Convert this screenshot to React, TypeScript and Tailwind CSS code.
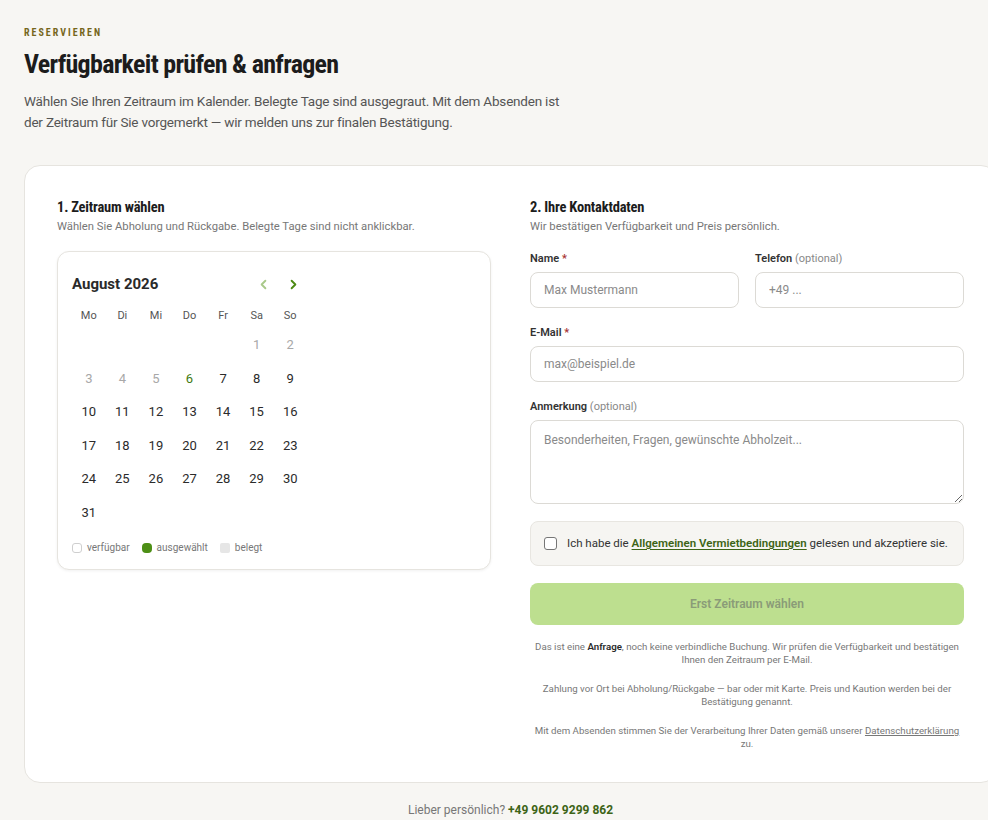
import React from "react";

const body = { fontFamily: 'Roboto, "Liberation Sans", sans-serif' };
const cond = {
  fontFamily: '"Roboto Condensed", "Noto Sans Condensed", "DejaVu Sans Condensed", "Liberation Sans Narrow", Roboto, sans-serif',
  fontStretch: "condensed",
};

const days: (number | null)[] = [
  null, null, null, null, null, 1, 2,
  3, 4, 5, 6, 7, 8, 9,
  10, 11, 12, 13, 14, 15, 16,
  17, 18, 19, 20, 21, 22, 23,
  24, 25, 26, 27, 28, 29, 30,
  31, null, null, null, null, null, null,
];

function dayClass(d: number) {
  if (d <= 5) return "text-[#a8a8a8]";
  if (d === 6) return "text-[#3f7a12]";
  return "text-[#2b2b2b]";
}

function Calendar() {
  return (
    <div className="mt-4 rounded-xl border border-[#e6e4df] bg-white px-[14px] pt-[18px] pb-[14px] shadow-[0_1px_3px_rgba(0,0,0,0.06)]">
      <div className="w-[235px]">
        <div className="flex h-[28px] items-center justify-between">
          <div className="text-[15px] font-bold text-[#2a2a2a]">August 2026</div>
          <div className="flex gap-[2px]">
            <button className="flex h-[28px] w-[28px] items-center justify-center text-[#a9c98a]">
              <svg width="15" height="15" viewBox="0 0 24 24" fill="none" stroke="currentColor" strokeWidth="3" strokeLinecap="round" strokeLinejoin="round"><path d="M15 18l-6-6 6-6" /></svg>
            </button>
            <button className="flex h-[28px] w-[28px] items-center justify-center text-[#4d8a14]">
              <svg width="15" height="15" viewBox="0 0 24 24" fill="none" stroke="currentColor" strokeWidth="3" strokeLinecap="round" strokeLinejoin="round"><path d="M9 18l6-6-6-6" /></svg>
            </button>
          </div>
        </div>
        <div className="mt-[6px] grid grid-cols-7">
          {["Mo", "Di", "Mi", "Do", "Fr", "Sa", "So"].map((w) => (
            <div key={w} className="flex h-[24px] items-center justify-center text-[11px] text-[#555]">{w}</div>
          ))}
          {days.map((d, i) => (
            <div key={i} className={`flex h-[33.6px] items-center justify-center text-[13px] ${d ? dayClass(d) : ""}`}>
              {d ?? ""}
            </div>
          ))}
        </div>
      </div>
      <div className="mt-[11px] flex items-center gap-3 text-[10px] leading-[14px] text-[#777]">
        <div className="flex items-center gap-[5px]">
          <span className="inline-block h-[10px] w-[10px] rounded-[3px] border border-[#cfcfcf] bg-white" />
          verfügbar
        </div>
        <div className="flex items-center gap-[5px]">
          <span className="inline-block h-[10px] w-[10px] rounded-[4px] bg-[#4d8f16]" />
          ausgewählt
        </div>
        <div className="flex items-center gap-[5px]">
          <span className="inline-block h-[10px] w-[10px] rounded-[2px] bg-[#e6e6e6]" />
          belegt
        </div>
      </div>
    </div>
  );
}

function Label({ text, req, opt }: { text: string; req?: boolean; opt?: boolean }) {
  return (
    <div className="mb-[6px] h-[14px] text-[11px] leading-[14px] font-semibold text-[#333]">
      {text}
      {req && <span className="text-[#a83232]"> *</span>}
      {opt && <span className="font-normal text-[#888]"> (optional)</span>}
    </div>
  );
}

const inputCls =
  "h-[36px] w-full rounded-lg border border-[#dcdad5] bg-white px-[13px] text-[12px] text-[#333] placeholder-[#8a8a8a] outline-none";

export default function App() {
  return (
    <div className="min-h-screen w-[1021px] bg-[#f7f6f3] px-6 pt-[27px] pb-[4px]" style={body}>
      <div className="text-[10px] leading-[12px] font-bold tracking-[0.2em] text-[#76661c]" style={cond}>RESERVIEREN</div>
      <h1 className="mt-2 text-[26px] leading-[34px] font-bold tracking-[-0.7px] text-[#1c1c1c]" style={cond}>
        Verfügbarkeit prüfen &amp; anfragen
      </h1>
      <p className="mt-[10px] max-w-[556px] text-[13.5px] leading-[21px] tracking-[-0.2px] text-[#555]">
        Wählen Sie Ihren Zeitraum im Kalender. Belegte Tage sind ausgegraut. Mit dem Absenden ist der Zeitraum für Sie
        vorgemerkt — wir melden uns zur finalen Bestätigung.
      </p>

      <div className="mt-8 grid w-[973px] grid-cols-2 gap-[39px] rounded-2xl border border-[#e6e4df] bg-white px-[32px] pt-[32px] pb-[32px]">
        <div>
          <h2 className="text-[14.5px] leading-[20px] font-bold tracking-[-0.2px] text-[#1c1c1c]" style={cond}>1. Zeitraum wählen</h2>
          <p className="mt-[1px] text-[11.25px] leading-[16px] text-[#777]">
            Wählen Sie Abholung und Rückgabe. Belegte Tage sind nicht anklickbar.
          </p>
          <Calendar />
        </div>

        <div>
          <h2 className="text-[14.5px] leading-[20px] font-bold tracking-[-0.2px] text-[#1c1c1c]" style={cond}>2. Ihre Kontaktdaten</h2>
          <p className="mt-[1px] text-[11.25px] leading-[16px] text-[#777]">Wir bestätigen Verfügbarkeit und Preis persönlich.</p>

          <div className="mt-[17px] grid grid-cols-2 gap-4">
            <div>
              <Label text="Name" req />
              <input className={inputCls} placeholder="Max Mustermann" style={body} />
            </div>
            <div>
              <Label text="Telefon" opt />
              <input className={inputCls} placeholder="+49 ..." style={body} />
            </div>
          </div>

          <div className="mt-[18px]">
            <Label text="E-Mail" req />
            <input className={inputCls} placeholder="max@beispiel.de" style={body} />
          </div>

          <div className="mt-[18px]">
            <Label text="Anmerkung" opt />
            <textarea
              className="block h-[84px] w-full rounded-lg border border-[#dcdad5] bg-white px-[13px] py-[10px] text-[12px] text-[#333] placeholder-[#8a8a8a] outline-none"
              placeholder="Besonderheiten, Fragen, gewünschte Abholzeit..."
              style={body}
            />
          </div>

          <div className="mt-[17px] flex h-[45px] items-center gap-[10px] rounded-lg border border-[#e8e6e1] bg-[#f6f5f2] px-[13px]">
            <span className="inline-block h-[13px] w-[13px] shrink-0 rounded-[3px] border border-[#767676] bg-white" />
            <span className="text-[11.5px] whitespace-nowrap text-[#333]">
              Ich habe die{" "}
              <span className="font-semibold text-[#3d6416] underline underline-offset-2">Allgemeinen Vermietbedingungen</span>{" "}
              gelesen und akzeptiere sie.
            </span>
          </div>

          <button className="mt-[17px] flex h-[42px] w-full items-center justify-center rounded-lg bg-[#bddf8f] text-[12px] font-semibold text-[#8a9b78]">
            Erst Zeitraum wählen
          </button>

          <div className="mt-[15px] flex flex-col gap-[16px] text-center text-[9.7px] leading-[13px] text-[#777]">
            <p>
              Das ist eine <span className="font-semibold text-[#2a2a2a]">Anfrage</span>, noch keine verbindliche Buchung. Wir
              prüfen die Verfügbarkeit und bestätigen Ihnen den Zeitraum per E-Mail.
            </p>
            <p>
              Zahlung vor Ort bei Abholung/Rückgabe — bar oder mit Karte. Preis und Kaution werden bei der Bestätigung genannt.
            </p>
            <p>
              Mit dem Absenden stimmen Sie der Verarbeitung Ihrer Daten gemäß unserer{" "}
              <span className="underline">Datenschutzerklärung</span> zu.
            </p>
          </div>
        </div>
      </div>

      <div className="w-[973px] pt-[19px] text-center text-[12px] leading-[16px] text-[#777]">
        Lieber persönlich? <span className="font-bold text-[#3d6416]">+49 9602 9299 862</span>
      </div>
    </div>
  );
}
